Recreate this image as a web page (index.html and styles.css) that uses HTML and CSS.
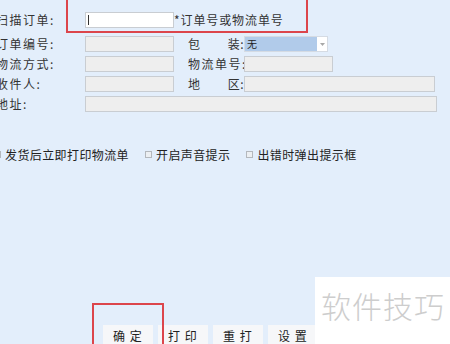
FILE: index.html
```html
<!DOCTYPE html>
<html lang="zh">
<head>
<meta charset="utf-8">
<link rel="stylesheet" href="styles.css">
</head>
<body>
<div class="page">
  <div class="scan-row">
    <span class="label">扫描订单:</span>
    <span class="input scan-input"><span class="caret"></span></span>
    <span class="hint">*订单号或物流单号</span>
  </div>

  <div class="form">
    <span class="label">订单编号:</span>
    <span class="input"></span>
    <span></span>
    <span class="label split"><span>包</span><span>装:</span></span>
    <span class="select"><span class="select-val">无</span><span class="select-btn"><svg width="5" height="3" viewBox="0 0 5 3"><path d="M0 0h5L2.5 3z" fill="#a8a8a8"/></svg></span></span>

    <span class="label">物流方式:</span>
    <span class="input"></span>
    <span></span>
    <span class="label">物流单号:</span>
    <span class="input w89"></span>

    <span class="label">收件人:</span>
    <span class="input"></span>
    <span></span>
    <span class="label split"><span>地</span><span>区:</span></span>
    <span class="input w191"></span>

    <span class="label">地址:</span>
    <span class="input addr"></span>
  </div>

  <div class="checks">
    <span class="check"><span class="box"></span>发货后立即打印物流单</span>
    <span class="check"><span class="box"></span>开启声音提示</span>
    <span class="check"><span class="box"></span>出错时弹出提示框</span>
  </div>

  <div class="buttons">
    <span class="btn">确 定</span>
    <span class="btn">打 印</span>
    <span class="btn">重 打</span>
    <span class="btn">设 置</span>
  </div>
</div>

<div class="mark top-mark"></div>
<div class="mark bottom-mark"></div>
<div class="watermark">软件技巧</div>
</body>
</html>
```

FILE: styles.css
```css
html, body {
  margin: 0;
  padding: 0;
}
body {
  width: 450px;
  height: 344px;
  overflow: hidden;
  background: #e3eefb;
  font-family: "Noto Sans CJK SC", "Noto Sans", sans-serif;
  font-size: 12px;
  color: #333;
  position: relative;
}
.page {
  padding-top: 12px;
  margin-left: -4px;
}
.label {
  letter-spacing: 1.5px;
  line-height: 16px;
  white-space: nowrap;
}
.scan-row {
  display: flex;
  align-items: center;
  height: 15px;
}
.scan-row .label {
  width: 89px;
}
.input {
  display: block;
  height: 14px;
  width: 87px;
  border: 1px solid #c9cdd2;
  background: #eeeeee;
}
.scan-input {
  background: #fff;
  position: relative;
}
.caret {
  position: absolute;
  left: 2px;
  top: 2px;
  width: 1px;
  height: 10px;
  background: #333;
}
.hint {
  letter-spacing: 0.9px;
  line-height: 15px;
}
.form {
  margin-top: 9px;
  display: grid;
  grid-template-columns: 89px 89px 14px 56px 1fr;
  grid-auto-rows: 16px;
  row-gap: 4px;
  width: 441px;
  align-items: center;
}
.form .input {
  height: 14px;
}
.split {
  display: flex;
  justify-content: space-between;
  letter-spacing: 0.5px;
}
.w89 { width: 87px; }
.w191 { width: 189px; }
.addr {
  grid-column: 2 / 6;
  width: 350px;
}
.select {
  display: flex;
  width: 84px;
  height: 16px;
  border: 1px solid #d5dbe3;
  box-sizing: border-box;
}
.select-val {
  flex: 1;
  background: #b1cbea;
  font-size: 10px;
  line-height: 14px;
  padding-left: 2px;
  color: #222;
}
.select-btn {
  width: 10px;
  background: #fff;
  display: flex;
  align-items: center;
  justify-content: center;
}
.checks {
  margin-top: 34px;
  margin-left: -2px;
  display: flex;
  height: 16px;
  align-items: center;
  color: #222;
}
.check {
  display: flex;
  align-items: center;
  letter-spacing: 0.4px;
  margin-right: 16px;
  font-size: 12px;
  white-space: nowrap;
}
.box {
  width: 5px;
  height: 5px;
  border: 1px solid #b4b8bd;
  background: #eceff2;
  margin-right: 4px;
}
.buttons {
  margin-top: 163px;
  margin-left: 107px;
  display: flex;
  gap: 5px;
}
.btn {
  display: block;
  width: 50px;
  height: 22px;
  padding-left: 10px;
  box-sizing: border-box;
  background: #f6f7f9;
  letter-spacing: 1px;
  line-height: 22px;
  color: #222;
  font-size: 12px;
}
.mark {
  position: absolute;
  border: 2px solid #dc454b;
  box-sizing: border-box;
}
.top-mark {
  left: 66px;
  top: -4px;
  width: 242px;
  height: 37px;
}
.bottom-mark {
  left: 92px;
  top: 303px;
  width: 72px;
  height: 50px;
}
.watermark {
  position: absolute;
  left: 315px;
  top: 277px;
  width: 135px;
  height: 67px;
  background: #fff;
  color: #cdcdcd;
  font-size: 30px;
  font-weight: 300;
  letter-spacing: 1px;
  padding: 10px 0 0 6px;
  box-sizing: border-box;
  line-height: 36px;
  white-space: nowrap;
}
```
